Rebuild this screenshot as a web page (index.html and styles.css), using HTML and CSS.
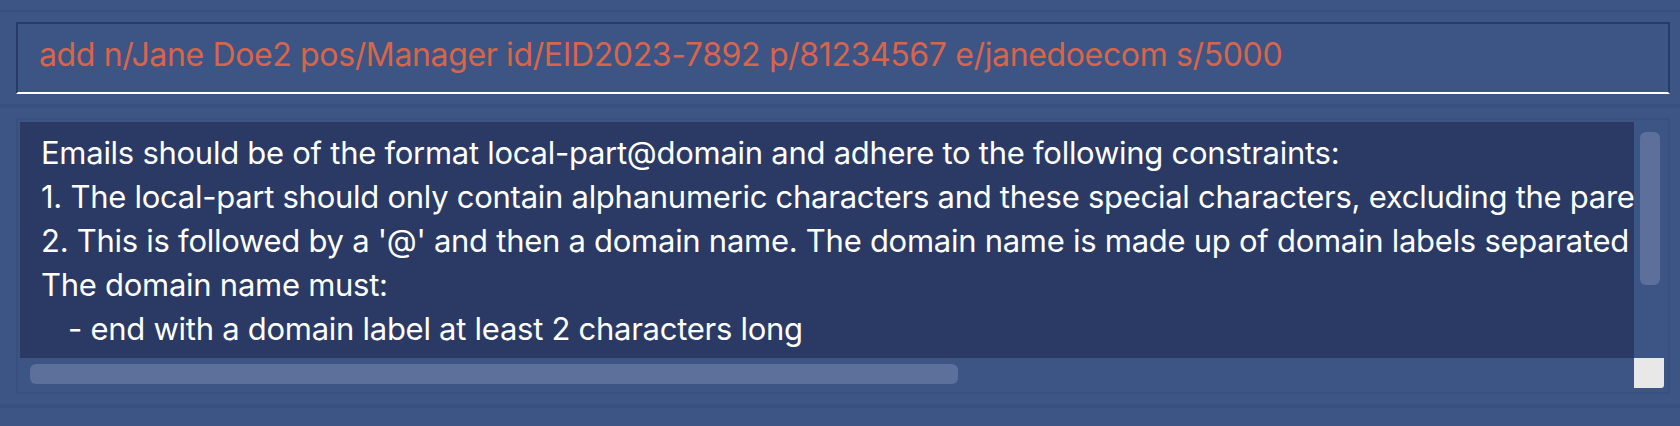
FILE: index.html
```html
<!DOCTYPE html>
<html lang="en">
<head>
<meta charset="utf-8">
<title>Command</title>
<link rel="stylesheet" href="styles.css">
</head>
<body>
<div class="app">
  <div class="top-strip"></div>
  <section class="command-section">
    <div class="command-box">add n/Jane Doe2 pos/Manager id/EID2023-7892 p/81234567 e/janedoecom s/5000</div>
  </section>
  <div class="divider"></div>
  <section class="result-section">
    <div class="result-box">
      <div class="result-panel">
        <div class="result-line">Emails should be of the format local-part@domain and adhere to the following constraints:</div>
        <div class="result-line">1. The local-part should only contain alphanumeric characters and these special characters, excluding the parentheses, (+_.-). The local-part may not start or end with any special characters.</div>
        <div class="result-line">2. This is followed by a '@' and then a domain name. The domain name is made up of domain labels separated by periods.</div>
        <div class="result-line">The domain name must:</div>
        <div class="result-line indent">- end with a domain label at least 2 characters long</div>
      </div>
      <div class="vtrack"><div class="vthumb"></div></div>
      <div class="htrack"><div class="hthumb"></div></div>
      <div class="corner"></div>
    </div>
  </section>
  <div class="divider"></div>
</div>
</body>
</html>
```

FILE: styles.css
```css
html, body {
  margin: 0;
  padding: 0;
}
body {
  background: #3d5585;
  width: 1680px;
  height: 426px;
  overflow: hidden;
  font-family: "Inter", "Noto Sans", sans-serif;
}
.app {
  display: flex;
  flex-direction: column;
}
.top-strip {
  height: 10px;
  border-bottom: 2px solid #394f7e;
}
.command-section {
  padding: 10px 10px 10px 16px;
}
.command-box {
  height: 59px;
  box-sizing: content-box;
  border: 2px solid #2a3a66;
  border-bottom-color: #ffffff;
  padding: 9px 0 0 21px;
  background: #3d5585;
  color: #d8654b;
  font-size: 32px;
  line-height: 44px;
  letter-spacing: -0.36px;
  white-space: nowrap;
  overflow: hidden;
}
.divider {
  height: 4px;
  background: #394f7e;
}
.result-section {
  padding: 10px 10px 10px 16px;
}
.result-box {
  border: 2px solid #394f7e;
  padding: 2px 4px 4px 2px;
  box-sizing: content-box;
  display: grid;
  grid-template-columns: 1fr 30px;
  grid-template-rows: 1fr 30px;
  height: 266px;
}
.result-panel {
  background: #2a3a65;
  overflow: hidden;
  padding: 9px 0 0 21px;
  min-width: 0;
}
.result-line {
  color: #ffffff;
  font-size: 31px;
  line-height: 44px;
  letter-spacing: -0.27px;
  white-space: nowrap;
}
.indent {
  padding-left: 27px;
}
.vtrack {
  padding: 10px 4px 0 6px;
}
.vthumb {
  height: 153px;
  background: #5c709b;
  border-radius: 6px;
}
.htrack {
  padding: 6px 0 4px 10px;
}
.hthumb {
  width: 928px;
  height: 20px;
  background: #5c709b;
  border-radius: 6px;
}
.corner {
  background: #e8e8e8;
  border-bottom-right-radius: 3px;
}
```
